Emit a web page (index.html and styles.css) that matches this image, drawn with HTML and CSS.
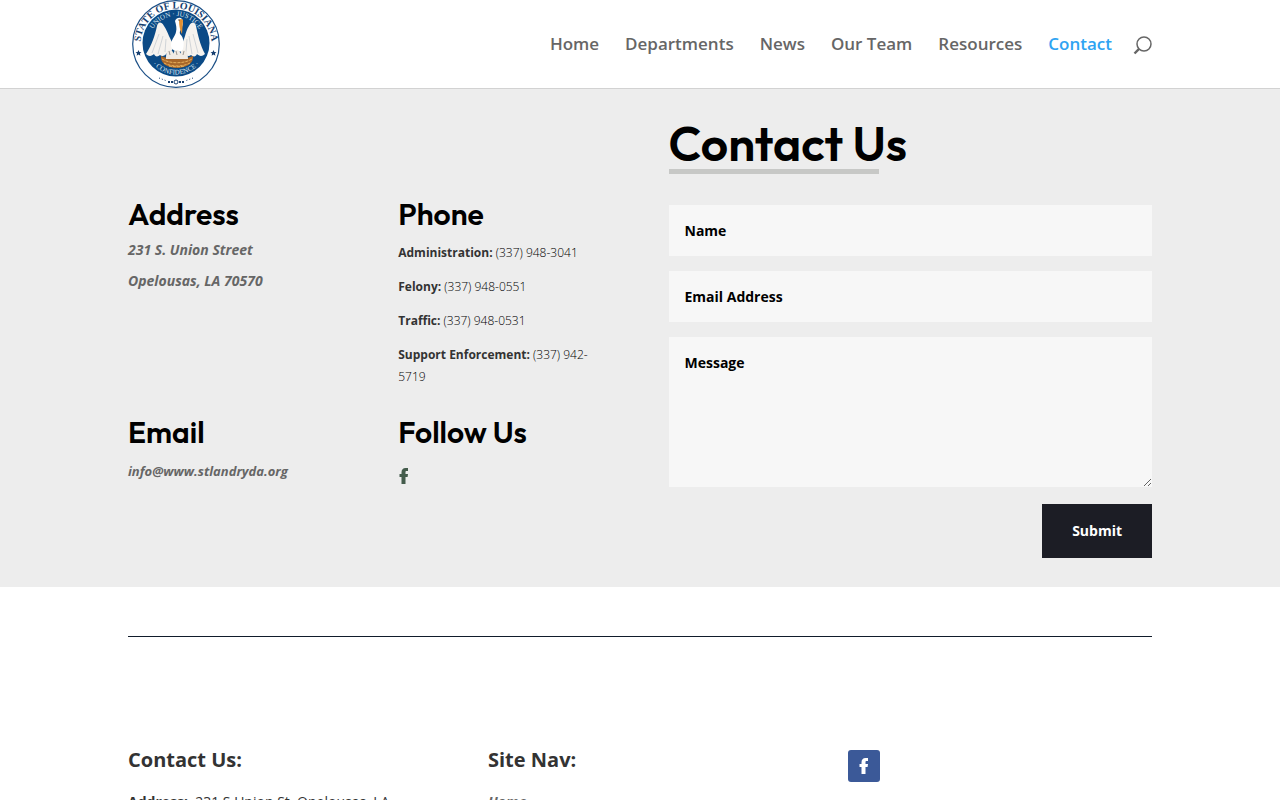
FILE: index.html
```html
<!DOCTYPE html>
<html lang="en">
<head>
    <meta charset="UTF-8">
    <meta name="viewport" content="width=device-width, initial-scale=1">
    <title>Contact</title>
    <link rel="stylesheet" href="styles.css">
</head>
<body>
<header class="site-header">
    <div class="container header-inner">
        <a class="logo" href="#" aria-label="State of Louisiana">
            <svg width="88" height="88" viewBox="0 0 88 88">
                <defs>
                    <path id="arcOuter" d="M8.500 44a35.500 35.500 0 0 1 71 0"/>
                    <path id="arcInner" d="M17 43a27 27 0 0 1 54 0"/>
                    <path id="arcBottom" d="M12.500 43a31.500 31.500 0 0 0 63 0"/>
                </defs>
                <circle cx="44" cy="44" r="43.300" fill="#fff" stroke="#1b4f86" stroke-width="1.200"/>
                <circle cx="44" cy="43" r="33.500" fill="#0b4a86"/>
                <text class="seal-name"><textPath href="#arcOuter" startOffset="50%">STATE OF LOUISIANA</textPath></text>
                <text class="seal-motto"><textPath href="#arcInner" startOffset="50%">UNION · JUSTICE</textPath></text>
                <text class="seal-motto"><textPath href="#arcBottom" startOffset="50%">· CONFIDENCE ·</textPath></text>
                <!-- wings -->
                <path fill="#f6f3ef" d="M42 45C38 40 36 32 32 26c-3-5-6-4-7 0-2 9-5 19-11 28 3 3 6 2 8 0 1 3 4 3 6 1 2 2 5 1 7-2 3 1 6-3 7-8z"/>
                <path fill="#f6f3ef" d="M49 45c4-5 4-13 8-19 3-5 6-4 7 0 2 9 4 19 9 28-3 3-6 2-8 0-1 3-4 3-6 1-2 2-5 1-7-2-3 1-5-3-3-8z"/>
                <path fill="none" stroke="#b7bfc7" stroke-width=".6" d="M20 53l7-19M26 54l5-18M33 52l1-13M66 53l-5-19M60 54l-3-18M54 52l1-13"/>
                <!-- nest -->
                <path fill="#a8672a" d="M29 56c9 4 23 4 32 0 1 7-6 12-16 12S28 63 29 56z"/>
                <path fill="none" stroke="#e6b05c" stroke-dasharray="3 1" d="M30 59c8 5 22 5 30 0M32 63c7 4 19 4 26 0M37 66c5 1 11 1 16 0"/>
                <!-- pelican body, head and beak -->
                <path fill="#fff" d="M43 21c2-5 8-4 8 1 0 6-4 8-3 12 4 3 5 12 2 17-4 2-10 0-11-5 0-7 4-9 5-14 1-4 0-7-1-11z"/>
                <path fill="#e39032" d="M47 20c2-2 4-1 4 1l-1 13c-2-3-3-9-3-14z"/>
                <circle cx="47" cy="20" r=".7" fill="#333"/>
                <!-- chicks -->
                <path fill="#f1ebe4" d="M34 59c0-6 1-9 4-9s4 4 4 9zM41 59c0-6 1-9 4-9s4 4 4 9zM48 59c0-6 1-9 4-9s4 4 4 9z"/>
                <path fill="none" stroke="#77716c" stroke-width=".7" d="M37 51l1 4M44 51l1 4M52 51l-1 4"/>
                <!-- stars and bottom ornament -->
                <path fill="#173f70" d="M6.500 50l.9 2 2.100.2-1.600 1.400.5 2.100-1.900-1.100-1.900 1.100.5-2.100-1.600-1.400 2.100-.2zM81.500 50l.9 2 2.100.2-1.600 1.400.5 2.100-1.900-1.100-1.900 1.100.5-2.100-1.600-1.400 2.100-.2z"/>
                <path fill="none" stroke="#173f70" stroke-dasharray="1 2" d="M27 78l8 3M61 78l-8 3"/>
                <path fill="none" stroke="#173f70" stroke-width="2" stroke-dasharray="2 1" d="M36 82h5M47 82h5"/>
                <circle cx="44" cy="82" r="2" fill="none" stroke="#173f70"/>
            </svg>
        </a>
        <nav class="main-nav">
            <a href="#">Home</a>
            <a href="#">Departments</a>
            <a href="#">News</a>
            <a href="#">Our Team</a>
            <a href="#">Resources</a>
            <a href="#" class="active">Contact</a>
            <button class="search" type="button" aria-label="Search">
                <svg width="20" height="20" viewBox="0 0 20 20" fill="none" stroke="#666">
                    <circle cx="12" cy="9" r="7" stroke-width="1.500"/>
                    <path stroke-width="2.400" d="M7.300 13.700L2.500 18.500"/>
                </svg>
            </button>
        </nav>
    </div>
</header>

<main>
    <section class="contact">
        <div class="container contact-inner">
            <div class="info">
                <div>
                    <h2>Address</h2>
                    <address class="address">
                        <p>231 S. Union Street</p>
                        <p>Opelousas, LA 70570</p>
                    </address>
                </div>
                <div>
                    <h2>Phone</h2>
                    <div class="phones">
                        <p><strong>Administration:</strong> (337) 948-3041</p>
                        <p><strong>Felony:</strong> (337) 948-0551</p>
                        <p><strong>Traffic:</strong> (337) 948-0531</p>
                        <p><strong>Support Enforcement:</strong> (337) 942-5719</p>
                    </div>
                </div>
                <div>
                    <h2>Email</h2>
                    <a class="email" href="#">info@www.stlandryda.org</a>
                </div>
                <div>
                    <h2>Follow Us</h2>
                    <a class="follow" href="#" aria-label="Facebook">
                        <svg width="10" height="16" viewBox="0 0 10 16"><path fill="#445c4c" d="M2.500 16V9H.5V6h2V4.500C2.500 1.500 4 0 6.500 0H9v3H7.600C6.700 3 6.500 3.400 6.500 4.200V6H9l-.4 3H6.500v7z"/></svg>
                    </a>
                </div>
            </div>
            <div class="form-column">
                <h1>Contact Us</h1>
                <form>
                    <div class="fields">
                        <input type="text" placeholder="Name" aria-label="Name">
                        <input type="email" placeholder="Email Address" aria-label="Email Address">
                        <textarea placeholder="Message" aria-label="Message"></textarea>
                    </div>
                    <button class="submit" type="submit">Submit</button>
                </form>
            </div>
        </div>
    </section>
</main>

<footer class="container">
    <hr>
    <div class="footer-columns">
        <div>
            <h3>Contact Us:</h3>
            <p><strong>Address:</strong>&nbsp; 231 S Union St. Opelousas, LA</p>
        </div>
        <div>
            <h3>Site Nav:</h3>
            <a class="footer-link" href="#">Home</a>
        </div>
        <div>
            <a class="facebook" href="#" aria-label="Facebook">
                <svg width="10" height="16" viewBox="0 0 10 16"><path fill="#fff" d="M2.500 16V9H.5V6h2V4.500C2.500 1.500 4 0 6.500 0H9v3H7.600C6.700 3 6.500 3.400 6.500 4.200V6H9l-.4 3H6.500v7z"/></svg>
            </a>
        </div>
    </div>
</footer>
</body>
</html>
```

FILE: styles.css
```css
* {
    box-sizing: border-box;
}
body {
    margin: 0;
    background: #fff;
    color: #333;
    font-family: "Open Sans", Arial, sans-serif;
    font-size: 14px;
}
h1, h2, h3, p {
    margin: 0;
}
a {
    text-decoration: none;
}
svg {
    display: block;
}
.container {
    width: 80%;
    max-width: 1080px;
    margin: 0 auto;
}

/* header */
.site-header {
    border-bottom: 1px solid #d2d2d2;
}
.header-inner {
    display: flex;
    align-items: center;
    justify-content: space-between;
}
.logo {
    padding-left: 4px;
}
.seal-name, .seal-motto {
    font-family: "Liberation Serif", serif;
    text-anchor: middle;
}
.seal-name {
    font-size: 10px;
    font-weight: bold;
    fill: #173f70;
}
.seal-motto {
    font-size: 7px;
    fill: #dbe6f0;
}
.main-nav {
    display: flex;
    align-items: center;
    gap: 26px;
    padding-bottom: 2px;
    font-size: 17px;
    font-weight: 600;
}
.main-nav a {
    color: #666;
}
.main-nav .active {
    color: #2ea3f2;
}
.search {
    margin-left: -6px;
    padding: 4px 0 0;
    border: 0;
    background: none;
    cursor: pointer;
}

/* contact section */
.contact {
    padding: 32px 0 29px;
    background: #ededed;
}
.contact-inner {
    display: grid;
    grid-template-columns: 1fr 1fr;
    gap: 57px;
}
.info {
    display: grid;
    grid-template-columns: 1fr 1fr;
    align-content: start;
    gap: 29px 57px;
    padding-top: 78px;
}
h1, h2 {
    color: #000;
    font-family: Outfit, Lato, sans-serif;
    font-weight: 600;
}
h1 {
    font-size: 48px;
    line-height: 44px;
}
h1::after {
    content: "";
    display: block;
    width: 210px;
    height: 5px;
    margin: 4px 0 31px;
    background: #c7c8c6;
}
h2 {
    margin-bottom: 9px;
    font-size: 30px;
    line-height: 30px;
}
.address {
    display: grid;
    gap: 7px;
    color: #666;
    font-weight: 700;
    line-height: 24px;
}
.phones {
    display: grid;
    gap: 12px;
    padding-top: 4px;
    color: #000;
    font-size: 12px;
    font-weight: 300;
    line-height: 22px;
}
.email {
    display: block;
    padding-top: 4px;
    color: #666;
    font-size: 13px;
    font-style: italic;
    font-weight: 700;
    line-height: 22px;
}
.follow {
    display: inline-block;
    padding: 12px 1px 0;
}
.fields {
    display: grid;
    gap: 15px;
}
.fields input, .fields textarea {
    width: 100%;
    height: 51px;
    padding: 16px;
    border: 0;
    border-radius: 0;
    background: #f7f7f7;
    color: #000;
    font: 700 14px/20px "Open Sans", Arial, sans-serif;
}
.fields textarea {
    display: block;
    height: 150px;
}
.fields ::placeholder {
    color: #000;
    opacity: 1;
}
.submit {
    display: block;
    margin: 17px 0 0 auto;
    padding: 16px 30px;
    border: 0;
    background: #1c1d25;
    color: #fff;
    font: 700 14px/22px "Open Sans", Arial, sans-serif;
    cursor: pointer;
}

/* footer */
hr {
    margin: 49px 0 113px;
    border: 0;
    border-top: 1px solid #111c2b;
}
.footer-columns {
    display: grid;
    grid-template-columns: repeat(3, 1fr);
    gap: 56px;
    line-height: 24px;
}
.phones strong, .footer-columns strong {
    color: #333;
    font-weight: 700;
}
h3 {
    margin-bottom: 20px;
    font-size: 20px;
    line-height: 20px;
}
.footer-link {
    display: block;
    color: #666;
    font-style: italic;
    font-weight: 700;
}
.facebook {
    display: flex;
    align-items: center;
    justify-content: center;
    width: 32px;
    height: 32px;
    border-radius: 3px;
    background: #3b5998;
}
```
